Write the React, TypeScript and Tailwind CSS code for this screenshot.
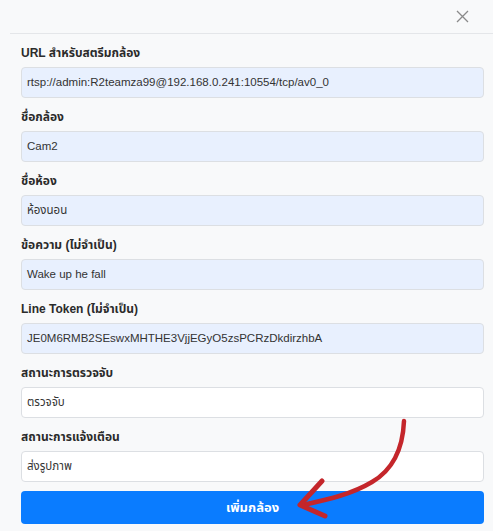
import React from "react";

const font = { fontFamily: '"Liberation Sans", "Noto Sans Thai", "Noto Sans", sans-serif' };

function Field({ label, value, white }: { label: string; value: string; white?: boolean }) {
  return (
    <div className="flex flex-col mb-[9px]">
      <label className="h-[20px] leading-[20px] text-[12px] font-bold text-[#2b2b2b] mb-[4px]">{label}</label>
      <div
        className={
          "h-[31px] flex items-center pl-[5px] text-[11.5px] text-[#333] rounded-[4px] border border-[#dcdfe3] " +
          (white ? "bg-white" : "bg-[#e8f0fe]")
        }
      >
        {value}
      </div>
    </div>
  );
}

export default function App() {
  return (
    <div className="relative w-[493px] h-[531px] bg-[#f8f9fa] overflow-hidden" style={font}>
      <div className="ml-[10px] h-[34px] border-b border-[#e4e6e9] flex items-center justify-end pr-[24px]">
        <svg width="13" height="13" viewBox="0 0 13 13">
          <path d="M1 1 L12 12 M12 1 L1 12" stroke="#8a8a8a" strokeWidth="1.3" fill="none" />
        </svg>
      </div>
      <div className="pl-[21px] pr-[9px] pt-[9px]">
        <Field label="URL สำหรับสตรีมกล้อง" value="rtsp://admin:R2teamza99@192.168.0.241:10554/tcp/av0_0" />
        <Field label="ชื่อกล้อง" value="Cam2" />
        <Field label="ชื่อห้อง" value="ห้องนอน" />
        <Field label="ข้อความ (ไม่จำเป็น)" value="Wake up he fall" />
        <Field label="Line Token (ไม่จำเป็น)" value="JE0M6RMB2SEswxMHTHE3VjjEGyO5zsPCRzDkdirzhbA" />
        <Field label="สถานะการตรวจจับ" value="ตรวจจับ" white />
        <Field label="สถานะการแจ้งเตือน" value="ส่งรูปภาพ" white />
        <button className="mt-[1px] w-full h-[33px] rounded-[4px] bg-[#0a7cff] text-white text-[13px] font-bold flex items-center justify-center">
          เพิ่มกล้อง
        </button>
      </div>
      <svg className="absolute left-0 top-0 pointer-events-none" width="493" height="531" viewBox="0 0 493 531">
        <path
          d="M404 421 C403 445 396 468 372 482 C352 494 330 499 303 505"
          stroke="#c4262b"
          strokeWidth="4.5"
          fill="none"
          strokeLinecap="round"
        />
        <path
          d="M322 481 L300 505 L325 516"
          stroke="#c4262b"
          strokeWidth="5"
          fill="none"
          strokeLinecap="round"
          strokeLinejoin="round"
        />
      </svg>
    </div>
  );
}
